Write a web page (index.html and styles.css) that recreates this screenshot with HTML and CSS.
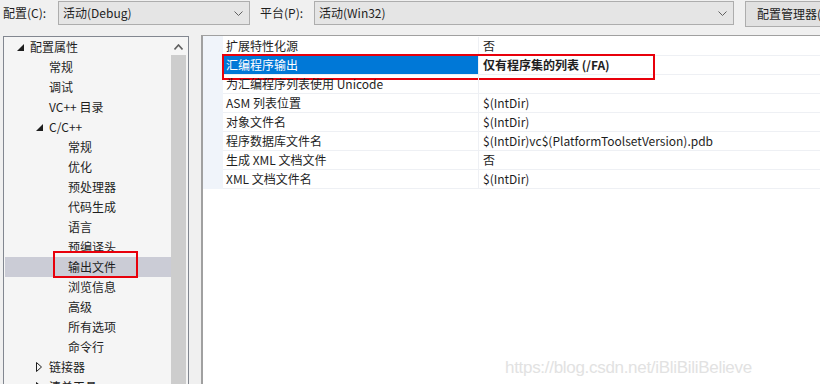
FILE: index.html
```html
<!DOCTYPE html>
<html>
<head>
	<meta charset="utf-8">
	<title>属性页</title>
	<link rel="stylesheet" href="styles.css">
</head>
<body>
	<div class="toolbar">
		<span class="lbl">配置(C):</span>
		<div class="combo combo-conf">活动(Debug)<svg class="chev" width="9" height="5" viewBox="0 0 9 5"><path d="M0.5 0.5 L4.5 4.5 L8.5 0.5" fill="none" stroke="#606060"/></svg></div>
		<span class="lbl lbl-plat">平台(P):</span>
		<div class="combo combo-plat">活动(Win32)<svg class="chev" width="9" height="5" viewBox="0 0 9 5"><path d="M0.5 0.5 L4.5 4.5 L8.5 0.5" fill="none" stroke="#606060"/></svg></div>
		<div class="btn">配置管理器(O)...</div>
	</div>

	<div class="main">
		<div class="tree">
			<ul class="nodes">
				<li class="l0"><svg class="tri" width="7" height="7" viewBox="0 0 7 7"><path d="M7 0 L7 7 L0 7 Z" fill="#1e1e1e"/></svg>配置属性</li>
				<li class="l1">常规</li>
				<li class="l1">调试</li>
				<li class="l1">VC++ 目录</li>
				<li class="l1"><svg class="tri" width="7" height="7" viewBox="0 0 7 7"><path d="M7 0 L7 7 L0 7 Z" fill="#1e1e1e"/></svg>C/C++</li>
				<li class="l2">常规</li>
				<li class="l2">优化</li>
				<li class="l2">预处理器</li>
				<li class="l2">代码生成</li>
				<li class="l2">语言</li>
				<li class="l2">预编译头</li>
				<li class="l2 sel">输出文件<span class="mark mark-tree"></span></li>
				<li class="l2">浏览信息</li>
				<li class="l2">高级</li>
				<li class="l2">所有选项</li>
				<li class="l2">命令行</li>
				<li class="l1"><svg class="tri" width="6" height="10" viewBox="0 0 6 10"><path d="M0.5 0.5 L5.5 5 L0.5 9.5 Z" fill="none" stroke="#1e1e1e"/></svg>链接器</li>
				<li class="l1"><svg class="tri" width="6" height="10" viewBox="0 0 6 10"><path d="M0.5 0.5 L5.5 5 L0.5 9.5 Z" fill="none" stroke="#1e1e1e"/></svg>清单工具</li>
			</ul>
			<div class="scroll">
				<svg class="up" width="9" height="6" viewBox="0 0 9 6"><path d="M0.5 5.5 L4.5 1 L8.5 5.5" fill="none" stroke="#606060" stroke-width="1.6"/></svg>
				<div class="thumb"></div>
			</div>
		</div>

		<div class="grid">
			<div class="row"><span class="name">扩展特性化源</span><span class="val">否</span></div>
			<div class="row active"><span class="name">汇编程序输出</span><span class="val bold">仅有程序集的列表 (/FA)</span><span class="mark mark-grid"></span></div>
			<div class="row"><span class="name">为汇编程序列表使用 Unicode</span><span class="val"></span></div>
			<div class="row"><span class="name">ASM 列表位置</span><span class="val">$(IntDir)</span></div>
			<div class="row"><span class="name">对象文件名</span><span class="val">$(IntDir)</span></div>
			<div class="row"><span class="name">程序数据库文件名</span><span class="val">$(IntDir)vc$(PlatformToolsetVersion).pdb</span></div>
			<div class="row"><span class="name">生成 XML 文档文件</span><span class="val">否</span></div>
			<div class="row"><span class="name">XML 文档文件名</span><span class="val">$(IntDir)</span></div>
			<div class="watermark">https://blog.csdn.net/iBliBiliBelieve</div>
		</div>
	</div>
</body>
</html>
```

FILE: styles.css
```css
html, body{
	margin: 0;
	padding: 0;
	height: 100%;
	overflow: hidden;
}
body{
	background: #f0f0f0;
	font-family: "Noto Sans CJK SC", "Liberation Sans", sans-serif;
	font-size: 12px;
	color: #1e1e1e;
}
ul{
	margin: 0;
	padding: 0;
	list-style: none;
}

/* top bar with the two combos */
.toolbar{
	display: flex;
	align-items: flex-start;
	height: 35px;
	padding-left: 3px;
	white-space: nowrap;
}
.toolbar > *{
	flex-shrink: 0;
}
.lbl{
	line-height: 25px;
	width: 55px;
}
.lbl-plat{
	margin-left: 10px;
	width: 54px;
}
.combo{
	position: relative;
	box-sizing: border-box;
	height: 24px;
	margin-top: 1px;
	line-height: 22px;
	padding-left: 4px;
	background: #e5e5e5;
	border: 1px solid #adadad;
}
.combo-conf{
	width: 192px;
}
.combo-plat{
	width: 420px;
}
.chev{
	position: absolute;
	right: 6px;
	top: 9px;
}
.btn{
	box-sizing: border-box;
	margin-left: 11px;
	margin-top: 1px;
	height: 26px;
	line-height: 24px;
	padding: 0 11px;
	background: #e1e1e1;
	border: 1px solid #adadad;
}

.main{
	display: flex;
	gap: 12px;
	padding-left: 3px;
	height: 349px;
}

/* left tree */
.tree{
	display: flex;
	width: 186px;
	flex-shrink: 0;
	box-sizing: border-box;
	margin-top: 1px;
	background: #f5f5f5;
	border: 1px solid #828790;
	border-bottom: none;
	padding: 0 2px 0 1px;
}
.nodes{
	flex: 1;
}
.nodes li{
	position: relative;
	height: 20px;
	line-height: 20px;
	white-space: nowrap;
}
.l0{
	padding-left: 25px;
}
.l1{
	padding-left: 44px;
}
.l2{
	padding-left: 63px;
}
.tri{
	position: absolute;
	top: 7px;
}
.l0 .tri{
	left: 12px;
}
.l1 .tri{
	left: 31px;
}
.l1 svg[height="10"]{
	top: 5px;
}
.sel{
	background: #cbccd6;
}
.scroll{
	width: 15px;
	display: flex;
	flex-direction: column;
	align-items: center;
}
.up{
	margin: 7px 0 5px;
}
.thumb{
	flex: 1;
	width: 100%;
	background: #cdcdcd;
}

/* right property grid */
.grid{
	position: relative;
	flex: 1;
	background: #fff;
	border-top: 1px solid #a0a0a0;
	border-left: 2px solid #a0a0a0;
	padding-top: 1px;
	padding-left: 20px;
	background-image: linear-gradient(#f0f4fa, #f0f4fa);
	background-size: 20px 153px;
	background-repeat: no-repeat;
}
.row{
	position: relative;
	display: flex;
	height: 18px;
	line-height: 18px;
	border-bottom: 1px solid #eef0f4;
	white-space: nowrap;
}
.name{
	width: 252px;
	padding-left: 3px;
	border-right: 1px solid #eef0f4;
}
.val{
	padding-left: 4px;
}
.bold{
	font-weight: bold;
}
.active .name{
	background: #0078d7;
	color: #fff;
}

/* red highlight frames drawn over the screenshot */
.mark{
	position: absolute;
	border: 2px solid #e8000b;
	pointer-events: none;
}
.mark-tree{
	left: 48px;
	top: -6px;
	width: 81px;
	height: 23px;
}
.mark-grid{
	left: -1px;
	top: -2px;
	width: 429px;
	height: 22px;
}

.watermark{
	position: absolute;
	left: 302px;
	top: 322px;
	font-family: "Liberation Sans", sans-serif;
	font-size: 17px;
	color: #e2e2e2;
	white-space: nowrap;
	letter-spacing: -0.3px;
}
```
